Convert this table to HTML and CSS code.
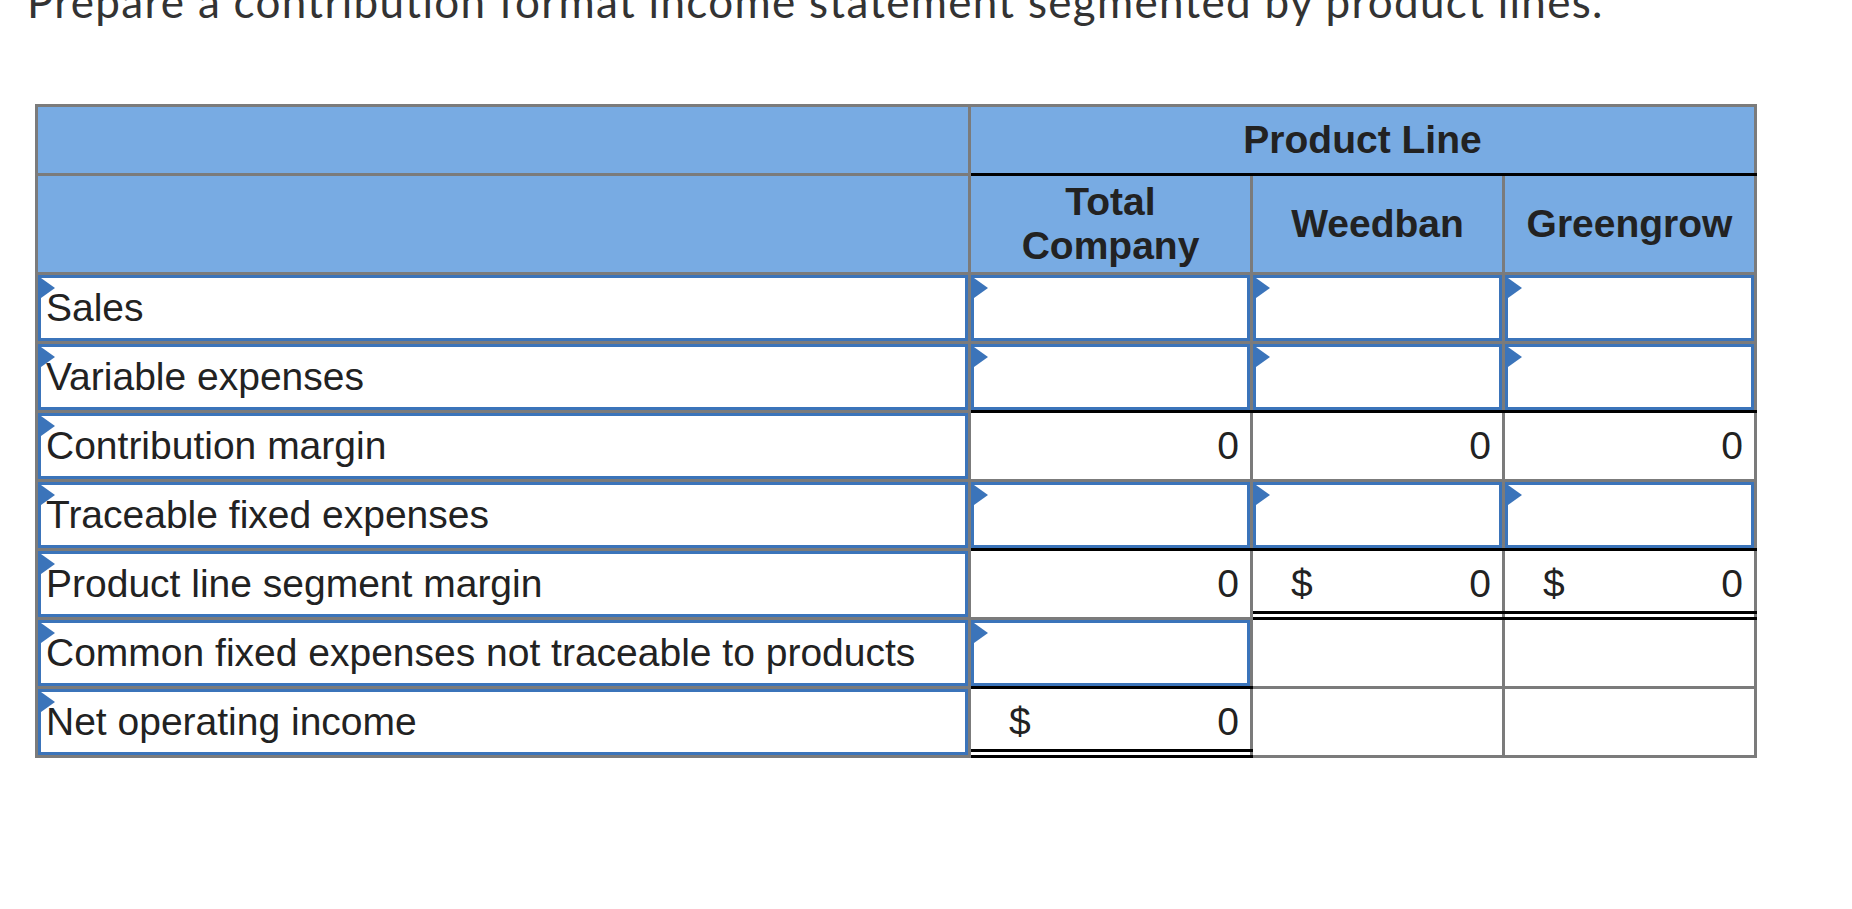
FILE: index.html
```html
<!DOCTYPE html>
<html lang="en">
<head>
<meta charset="utf-8">
<title>Contribution format income statement</title>
<link rel="stylesheet" href="styles.css">
</head>
<body>
<div class="page">
  <h1 class="prompt">Prepare a contribution format income statement segmented by product lines.</h1>

  <div class="sheet">
    <!-- header row 1 -->
    <div class="hd"></div>
    <div class="hd span3 rule">Product Line</div>
    <!-- header row 2 -->
    <div class="hd"></div>
    <div class="hd">Total<br>Company</div>
    <div class="hd">Weedban</div>
    <div class="hd">Greengrow</div>

    <!-- Sales -->
    <div class="cell"><div class="box label"><span class="flag"></span>Sales</div></div>
    <div class="cell"><div class="box"><span class="flag"></span></div></div>
    <div class="cell"><div class="box"><span class="flag"></span></div></div>
    <div class="cell"><div class="box"><span class="flag"></span></div></div>

    <!-- Variable expenses -->
    <div class="cell"><div class="box label"><span class="flag"></span>Variable expenses</div></div>
    <div class="cell rule"><div class="box"><span class="flag"></span></div></div>
    <div class="cell rule"><div class="box"><span class="flag"></span></div></div>
    <div class="cell rule"><div class="box"><span class="flag"></span></div></div>

    <!-- Contribution margin -->
    <div class="cell"><div class="box label"><span class="flag"></span>Contribution margin</div></div>
    <div class="cell num"><span class="amt">0</span></div>
    <div class="cell num"><span class="amt">0</span></div>
    <div class="cell num"><span class="amt">0</span></div>

    <!-- Traceable fixed expenses -->
    <div class="cell"><div class="box label"><span class="flag"></span>Traceable fixed expenses</div></div>
    <div class="cell rule"><div class="box"><span class="flag"></span></div></div>
    <div class="cell rule"><div class="box"><span class="flag"></span></div></div>
    <div class="cell rule"><div class="box"><span class="flag"></span></div></div>

    <!-- Product line segment margin -->
    <div class="cell"><div class="box label"><span class="flag"></span>Product line segment margin</div></div>
    <div class="cell num"><span class="amt">0</span></div>
    <div class="cell num dollar rule dbl"><span class="cur">$</span><span class="amt">0</span></div>
    <div class="cell num dollar rule dbl"><span class="cur">$</span><span class="amt">0</span></div>

    <!-- Common fixed expenses -->
    <div class="cell"><div class="box label"><span class="flag"></span>Common fixed expenses not traceable to products</div></div>
    <div class="cell rule"><div class="box"><span class="flag"></span></div></div>
    <div class="cell"></div>
    <div class="cell"></div>

    <!-- Net operating income -->
    <div class="cell"><div class="box label"><span class="flag"></span>Net operating income</div></div>
    <div class="cell num dollar rule dbl"><span class="cur">$</span><span class="amt">0</span></div>
    <div class="cell"></div>
    <div class="cell"></div>
  </div>
</div>
</body>
</html>
```

FILE: styles.css
```css
html, body {
  margin: 0;
  padding: 0;
  background: #ffffff;
}

.page {
  padding: 0 27px;
}

.prompt {
  margin: -25px 0 76px 0;
  font-family: Lato, "Open Sans", sans-serif;
  font-weight: 400;
  font-size: 44px;
  letter-spacing: 1.3px;
  line-height: 1.2;
  color: #333333;
  white-space: nowrap;
}

.sheet {
  margin-left: 8px;
  display: grid;
  grid-template-columns: 930px 279px 249px 249px;
  grid-template-rows: 66px 96px repeat(7, 66px);
  gap: 3px;
  padding: 3px;
  width: max-content;
  background: #7b7b7b;
  font-family: "Liberation Sans", Arial, sans-serif;
  font-size: 39px;
  color: #222222;
}

.hd {
  position: relative;
  background: #78abe3;
  display: flex;
  align-items: center;
  justify-content: center;
  text-align: center;
  font-weight: 700;
  line-height: 1.12;
}

.span3 {
  grid-column: span 3;
}

.cell {
  position: relative;
  background: #ffffff;
}

.box {
  position: relative;
  box-sizing: border-box;
  height: 100%;
  border: 3px solid #3b74ba;
  background: #ffffff;
  display: flex;
  align-items: center;
}

.label {
  padding-left: 5px;
  white-space: nowrap;
}

.flag {
  position: absolute;
  top: 0;
  left: 0;
  width: 0;
  height: 0;
  border-top: 10px solid transparent;
  border-bottom: 10px solid transparent;
  border-left: 14px solid #3b74ba;
}

.num {
  display: flex;
  align-items: center;
  justify-content: flex-end;
  padding: 0 11px 0 38px;
}

.dollar {
  justify-content: space-between;
}

.rule::after {
  content: "";
  position: absolute;
  left: 0;
  right: -3px;
  bottom: -3px;
  height: 3px;
  background: #000000;
}

.dbl::before {
  content: "";
  position: absolute;
  left: 0;
  right: -3px;
  bottom: 3px;
  height: 3px;
  background: #000000;
}
```
